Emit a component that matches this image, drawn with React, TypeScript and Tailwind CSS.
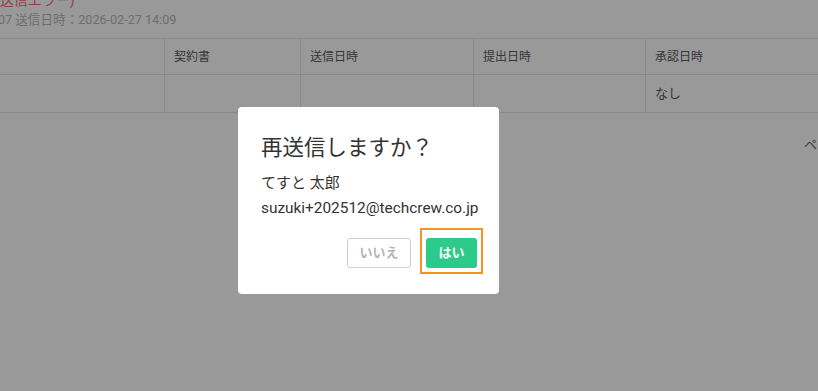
import { useState } from 'react'

const font = { fontFamily: "Roboto, 'Noto Sans CJK JP', 'Noto Sans', sans-serif" }

const columns = ['', '契約書', '送信日時', '提出日時', '承認日時']
const widths = ['w-[165px]', 'w-[136px]', 'w-[173px]', 'w-[172px]', 'flex-1']
const row = ['', '', '', '', 'なし']

function Table() {
  return (
    <div className="mt-[9px] border-t border-[#e4e4e4] text-[#5a5a5a]">
      <div className="flex h-[36px] border-b border-[#e4e4e4] text-[12px]">
        {columns.map((c, i) => (
          <div key={i} className={`${widths[i]} flex items-center pl-[9px] ${i < 4 ? 'border-r border-[#e4e4e4]' : ''}`}>
            {c}
          </div>
        ))}
      </div>
      <div className="flex h-[38px] border-b border-[#e4e4e4] text-[13px]">
        {row.map((c, i) => (
          <div key={i} className={`${widths[i]} flex items-center pl-[9px] ${i < 4 ? 'border-r border-[#e4e4e4]' : ''}`}>
            {c}
          </div>
        ))}
      </div>
    </div>
  )
}

export default function App() {
  const [open, setOpen] = useState(true)

  return (
    <div className="relative w-[818px] h-[391px] overflow-hidden bg-white" style={font}>
      {/* page underneath */}
      <div className="-mt-[10px]">
        <p className="-ml-[5px] text-[14px] leading-[20px] text-[#f56c6c] whitespace-nowrap">(送信エラー)</p>
        <p className="-ml-[2px] mt-[1px] text-[12.6px] leading-[18px] text-[#b8b8b8] whitespace-nowrap">07 送信日時：2026-02-27 14:09</p>
        <Table />
        <div className="mt-[22px] pl-[804px] text-[13px] text-[#6b6b6b] whitespace-nowrap">ページ</div>
      </div>

      {open && (
        <div className="absolute inset-0 bg-black/40 flex items-start">
          <div className="ml-[238px] mt-[107px] w-[261px] h-[187px] bg-white rounded-[4px] pl-[23px] pr-[16px] pt-[27px]">
            <h3 className="text-[21.5px] leading-[28px] text-[#333]">再送信しますか？</h3>
            <p className="mt-[11px] text-[15px] leading-[20px] text-[#333]">てすと 太郎</p>
            <p className="mt-[5px] text-[15.4px] leading-[20px] text-[#333] whitespace-nowrap">suzuki+202512@techcrew.co.jp</p>
            <div className="mt-[10px] flex justify-end items-end gap-[9px]">
              <button
                type="button"
                onClick={() => setOpen(false)}
                className="mb-[6px] w-[64px] h-[30px] rounded-[3px] border border-[#cfcfcf] bg-white text-[13px] font-bold text-[#b5b5b5]"
              >
                いいえ
              </button>
              <div className="pt-[8px] pb-[4px] px-[4px] border-[2px] border-[#f7931e]">
                <button
                  type="button"
                  onClick={() => setOpen(false)}
                  className="block w-[51px] h-[30px] rounded-[3px] bg-[#2dcb8b] text-[13px] font-bold text-white"
                >
                  はい
                </button>
              </div>
            </div>
          </div>
        </div>
      )}
    </div>
  )
}
